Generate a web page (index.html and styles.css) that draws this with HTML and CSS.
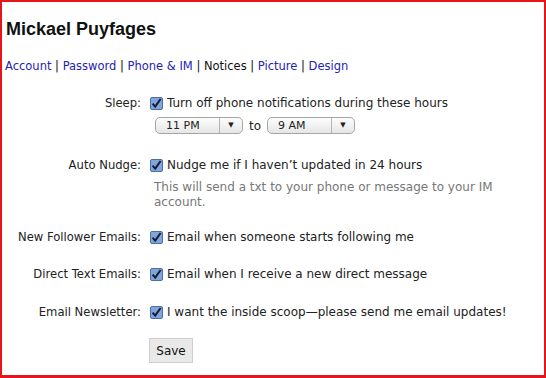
FILE: index.html
```html
<!DOCTYPE html>
<html lang="en">
<head>
    <meta charset="UTF-8">
    <title>Notices</title>
    <link rel="stylesheet" href="styles.css">
</head>
<body>
    <div class="frame">
        <h1>Mickael Puyfages</h1>
        <div class="tabs">
            <a href="#">Account</a> | <a href="#">Password</a> | <a href="#">Phone &amp; IM</a> | <span class="current">Notices</span> | <a href="#">Picture</a> | <a href="#">Design</a>
        </div>

        <form class="settings">
            <div class="row row-sleep">
                <div class="label">Sleep:</div>
                <div class="field">
                    <label class="check">
                        <svg class="box" width="13" height="13" viewBox="0 0 13 13"><rect x="0.5" y="0.5" width="12" height="12" rx="1.5" fill="#7fa6dc" stroke="#4a6fa5"/><path d="M2.6 6.6 L5.2 9.6 L10.6 2" fill="none" stroke="#1a1a2e" stroke-width="2"/></svg>
                        Turn off phone notifications during these hours
                    </label>
                    <div class="times">
                        <div class="select"><span class="value">11 PM</span><span class="arrow">&#9660;</span></div>
                        <span class="to">to</span>
                        <div class="select"><span class="value">9 AM</span><span class="arrow">&#9660;</span></div>
                    </div>
                </div>
            </div>

            <div class="row row-nudge">
                <div class="label">Auto Nudge:</div>
                <div class="field">
                    <label class="check">
                        <svg class="box" width="13" height="13" viewBox="0 0 13 13"><rect x="0.5" y="0.5" width="12" height="12" rx="1.5" fill="#7fa6dc" stroke="#4a6fa5"/><path d="M2.6 6.6 L5.2 9.6 L10.6 2" fill="none" stroke="#1a1a2e" stroke-width="2"/></svg>
                        Nudge me if I haven’t updated in 24 hours
                    </label>
                    <p class="help">This will send a txt to your phone or message to your IM account.</p>
                </div>
            </div>

            <div class="row row-follower">
                <div class="label">New Follower Emails:</div>
                <div class="field">
                    <label class="check">
                        <svg class="box" width="13" height="13" viewBox="0 0 13 13"><rect x="0.5" y="0.5" width="12" height="12" rx="1.5" fill="#7fa6dc" stroke="#4a6fa5"/><path d="M2.6 6.6 L5.2 9.6 L10.6 2" fill="none" stroke="#1a1a2e" stroke-width="2"/></svg>
                        Email when someone starts following me
                    </label>
                </div>
            </div>

            <div class="row row-direct">
                <div class="label">Direct Text Emails:</div>
                <div class="field">
                    <label class="check">
                        <svg class="box" width="13" height="13" viewBox="0 0 13 13"><rect x="0.5" y="0.5" width="12" height="12" rx="1.5" fill="#7fa6dc" stroke="#4a6fa5"/><path d="M2.6 6.6 L5.2 9.6 L10.6 2" fill="none" stroke="#1a1a2e" stroke-width="2"/></svg>
                        Email when I receive a new direct message
                    </label>
                </div>
            </div>

            <div class="row row-newsletter">
                <div class="label">Email Newsletter:</div>
                <div class="field">
                    <label class="check">
                        <svg class="box" width="13" height="13" viewBox="0 0 13 13"><rect x="0.5" y="0.5" width="12" height="12" rx="1.5" fill="#7fa6dc" stroke="#4a6fa5"/><path d="M2.6 6.6 L5.2 9.6 L10.6 2" fill="none" stroke="#1a1a2e" stroke-width="2"/></svg>
                        I want the inside scoop—please send me email updates!
                    </label>
                </div>
            </div>

            <div class="row">
                <div class="label"></div>
                <div class="field">
                    <button type="button" class="button">Save</button>
                </div>
            </div>
        </form>
    </div>
</body>
</html>
```

FILE: styles.css
```css
body {
    margin: 0;
    font-family: "DejaVu Sans", Verdana, sans-serif;
    font-size: 12px;
    color: #222;
    background-color: #fff;
}
.frame {
    height: 378px;
    box-sizing: border-box;
    border: 2px solid #e8141a;
    border-bottom-width: 3px;
    padding: 0 3px;
}
h1 {
    font-family: "Liberation Sans", Arial, sans-serif;
    font-size: 18px;
    font-weight: bold;
    color: #111;
    margin: 17px 0 0 1px;
    line-height: 20px;
}
.tabs {
    margin-top: 19px;
    font-size: 11.5px;
    line-height: 16px;
    color: #111;
}
.tabs a {
    color: #2323b4;
    text-decoration: none;
}
.settings {
    margin-top: 21px;
}
.row {
    display: grid;
    grid-template-columns: 136px 1fr;
    column-gap: 8px;
    margin-bottom: 20px;
}
.row-sleep {
    margin-bottom: 23px;
}
.row-nudge {
    margin-bottom: 19px;
}
.row-follower {
    margin-bottom: 21px;
}
.row-direct {
    margin-bottom: 22px;
}
.row-newsletter {
    margin-bottom: 18px;
}
.label {
    text-align: right;
    font-size: 11.6px;
    line-height: 16px;
    color: #222;
}
.check {
    display: flex;
    align-items: center;
    gap: 4px;
    line-height: 16px;
    margin-left: 1px;
    color: #222;
}
.box {
    flex: none;
}
.times {
    display: flex;
    align-items: center;
    gap: 6px;
    margin-top: 6px;
    margin-left: 6px;
}
.select {
    display: flex;
    width: 88px;
    height: 17px;
    box-sizing: border-box;
    border: 1px solid #a6a6a6;
    border-radius: 5px;
    background: linear-gradient(#fdfdfd, #e6e6e6);
    font-size: 11px;
    line-height: 15px;
}
.value {
    flex: 1;
    padding-left: 10px;
}
.arrow {
    width: 22px;
    border-left: 1px solid #b5b5b5;
    text-align: center;
    font-size: 7px;
    color: #222;
}
.to {
    line-height: 16px;
}
.help {
    margin: 7px 0 0 5px;
    color: #777;
    line-height: 15px;
    width: 340px;
}
.button {
    width: 44px;
    height: 25px;
    background-color: #e9e9e9;
    border: 1px solid #cfcfcf;
    border-radius: 0;
    font-family: "DejaVu Sans", Verdana, sans-serif;
    font-size: 12px;
    color: #111;
    padding: 0;
}
```
